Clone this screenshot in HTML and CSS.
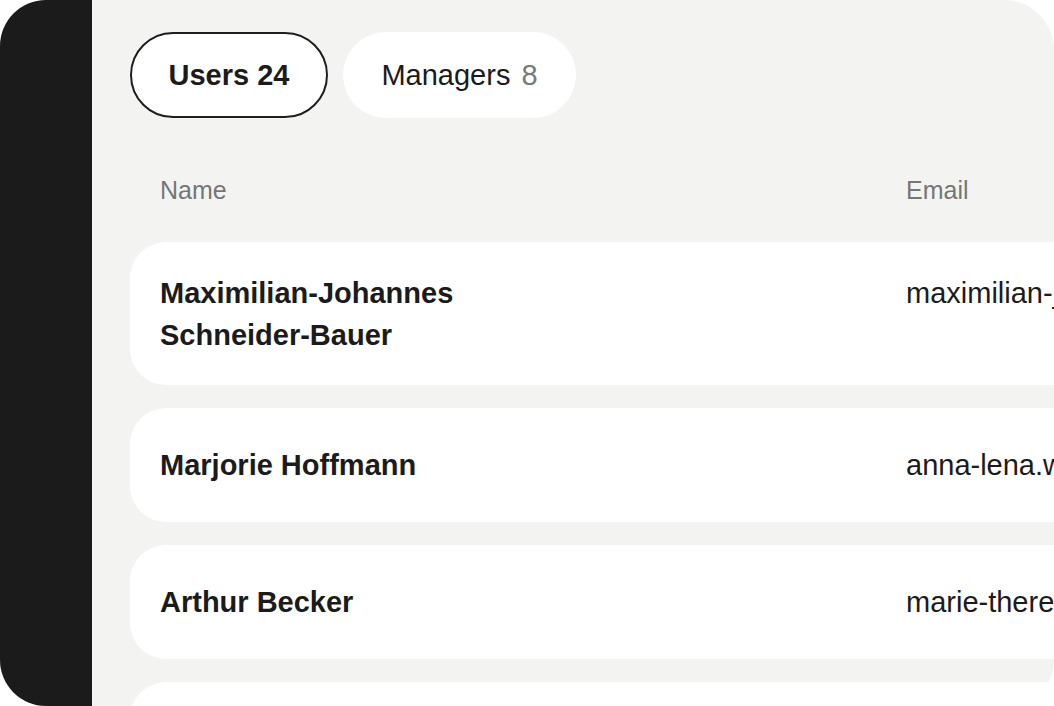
FILE: index.html
```html
<!DOCTYPE html>
<html lang="en">
<head>
    <meta charset="UTF-8">
    <meta name="viewport" content="width=device-width, initial-scale=1.0">
    <title>Team Members</title>
    <link rel="stylesheet" href="styles.css">
</head>
<body>
    <div class="frame">
        <!-- Sidebar -->
        <div class="sidebar"></div>

        <!-- Main content -->
        <div class="main">
            <div class="tabs">
                <button class="tab active">Users 24</button>
                <button class="tab">Managers <span class="count">8</span></button>
            </div>

            <div class="table">
                <div class="table-head">
                    <div>Name</div>
                    <div>Email</div>
                </div>

                <div class="table-row">
                    <div class="name">Maximilian-Johannes<br>Schneider-Bauer</div>
                    <div class="email">maximilian-johannes.schneider-bauer@company.de</div>
                </div>
                <div class="table-row">
                    <div class="name">Marjorie Hoffmann</div>
                    <div class="email">anna-lena.weber@company.de</div>
                </div>
                <div class="table-row">
                    <div class="name">Arthur Becker</div>
                    <div class="email">marie-therese.becker@company.de</div>
                </div>
                <div class="table-row">
                    <div class="name">Sophie Wagner</div>
                    <div class="email">sophie.wagner@company.de</div>
                </div>
            </div>
        </div>
    </div>
</body>
</html>
```

FILE: styles.css
```css
body {
    margin: 0;
    padding: 0;
    background-color: #ffffff;
    font-family: "Liberation Sans", Arial, sans-serif;
    color: #1b1b1b;
}

/* Outer rounded frame */
.frame {
    width: 1054px;
    height: 706px;
    display: flex;
    border-radius: 46px 50px 46px 46px;
    overflow: hidden;
    background-color: #f3f4f2;
}

.sidebar {
    width: 92px;
    flex-shrink: 0;
    background-color: #1b1b1b;
}

.main {
    flex: 1;
    padding: 32px 0 0 38px;
    overflow: hidden;
}

/* Tabs */
.tabs {
    display: flex;
    gap: 15px;
    margin-bottom: 57px;
}

.tab {
    height: 86px;
    padding: 0 36.5px;
    display: flex;
    align-items: center;
    background-color: #ffffff;
    border: 2px solid transparent;
    border-radius: 43px;
    font-family: inherit;
    font-size: 29px;
    color: #1b1b1b;
    white-space: nowrap;
}

.tab.active {
    border-color: #1e1e1e;
    font-weight: bold;
}

.tab .count {
    color: #7a7a7a;
    margin-left: 11px;
}

/* Table */
.table {
    width: 1200px;
    display: flex;
    flex-direction: column;
    gap: 23px;
}

.table-head,
.table-row {
    display: grid;
    grid-template-columns: 746px 1fr;
    padding: 0 30px;
}

.table-head {
    font-size: 25px;
    line-height: 30px;
    color: #767676;
    margin-bottom: 14px;
}

.table-row {
    box-sizing: border-box;
    min-height: 114px;
    padding: 29.5px 30px;
    background-color: #ffffff;
    border-radius: 36px;
    align-content: center;
    align-items: start;
    font-size: 29px;
    line-height: 42px;
}

.name {
    font-weight: bold;
}

.email {
    white-space: nowrap;
}
```
